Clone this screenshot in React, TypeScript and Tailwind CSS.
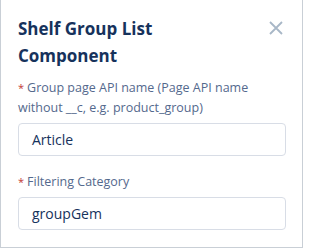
const Field = ({ label, value }: { label: string; value: string }) => (
  <div className="flex flex-col">
    <label className="text-[12.5px] leading-[20px] text-[#54698d]">
      <abbr className="no-underline text-[11px] leading-none text-[#c23934] mr-[3px]">*</abbr>
      {label}
    </label>
    <div className="mt-[5px] h-[33px] rounded-[4px] border border-[#d8dde6] bg-white px-[13px] flex items-center text-[14px] text-[#16325c]">
      {value}
    </div>
  </div>
)

export default function App() {
  return (
    <div className="w-[312px] h-[248px] bg-white overflow-hidden" style={{ fontFamily: '"Open Sans", sans-serif' }}>
      <div className="w-[303px] h-[248px] border-l border-r border-b border-[#c9cfd6] bg-white pl-[17px] pr-[16px] pt-[15px]">
        <div className="flex items-start justify-between">
          <h2 className="text-[17px] leading-[27px] font-bold text-[#16325c]">
            Shelf Group List
            <br />
            Component
          </h2>
          <button className="mt-[6px] mr-[3px] text-[#a8b7c7]">
            <svg width="14" height="14" viewBox="0 0 14 14" fill="none" stroke="currentColor" strokeWidth="1.8">
              <path d="M1 1L13 13M13 1L1 13" />
            </svg>
          </button>
        </div>
        <div className="mt-[9px] flex flex-col gap-[16px]">
          <Field label="Group page API name (Page API name without __c, e.g. product_group)" value="Article" />
          <Field label="Filtering Category" value="groupGem" />
        </div>
      </div>
    </div>
  )
}
